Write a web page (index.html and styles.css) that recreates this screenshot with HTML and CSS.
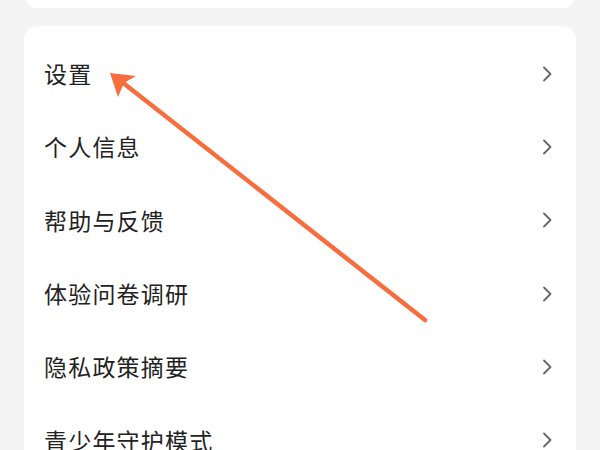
FILE: index.html
```html
<!DOCTYPE html>
<html lang="zh">
<head>
<meta charset="utf-8">
<link rel="stylesheet" href="styles.css">
</head>
<body>
<div class="page">
  <div class="card card-top"></div>
  <div class="card card-menu">
    <div class="row"><span class="label">设置</span><svg class="chev" viewBox="0 0 10 16"><path d="M2 1.5 L8.5 8 L2 14.5"/></svg></div>
    <div class="row"><span class="label">个人信息</span><svg class="chev" viewBox="0 0 10 16"><path d="M2 1.5 L8.5 8 L2 14.5"/></svg></div>
    <div class="row"><span class="label">帮助与反馈</span><svg class="chev" viewBox="0 0 10 16"><path d="M2 1.5 L8.5 8 L2 14.5"/></svg></div>
    <div class="row"><span class="label">体验问卷调研</span><svg class="chev" viewBox="0 0 10 16"><path d="M2 1.5 L8.5 8 L2 14.5"/></svg></div>
    <div class="row"><span class="label">隐私政策摘要</span><svg class="chev" viewBox="0 0 10 16"><path d="M2 1.5 L8.5 8 L2 14.5"/></svg></div>
    <div class="row"><span class="label">青少年守护模式</span><svg class="chev" viewBox="0 0 10 16"><path d="M2 1.5 L8.5 8 L2 14.5"/></svg></div>
  </div>
  <svg class="arrow" viewBox="0 0 600 450" width="600" height="450">
    <line x1="425" y1="320" x2="122" y2="82" stroke="#f76d3e" stroke-width="4.5" stroke-linecap="round"/>
    <path d="M110 73 L136 76 L124 83 L118 97 Z" fill="#f76d3e"/>
  </svg>
</div>
</body>
</html>
```
FILE: styles.css
```css
html, body {
  margin: 0;
  padding: 0;
}
body {
  background: #f4f4f4;
  font-family: "Noto Sans CJK SC", "Noto Sans", sans-serif;
}
.page {
  position: relative;
  width: 600px;
  height: 450px;
  overflow: hidden;
  padding: 0 24px;
  box-sizing: border-box;
}
.card {
  background: #ffffff;
  border-radius: 14px;
}
.card-top {
  height: 40px;
  margin-top: -32px;
}
.card-menu {
  margin-top: 18px;
  padding: 11px 0 0;
}
.row {
  height: 73.3px;
  display: flex;
  align-items: center;
  justify-content: space-between;
  padding: 0 24px 0 20px;
}
.label {
  font-size: 23px;
  color: #222222;
  line-height: 1;
  letter-spacing: 1.2px;
}
.chev {
  width: 10px;
  height: 16px;
  fill: none;
  stroke: #666;
  stroke-width: 1.8;
  stroke-linecap: round;
  stroke-linejoin: round;
}
.arrow {
  position: absolute;
  left: 0;
  top: 0;
}
```
